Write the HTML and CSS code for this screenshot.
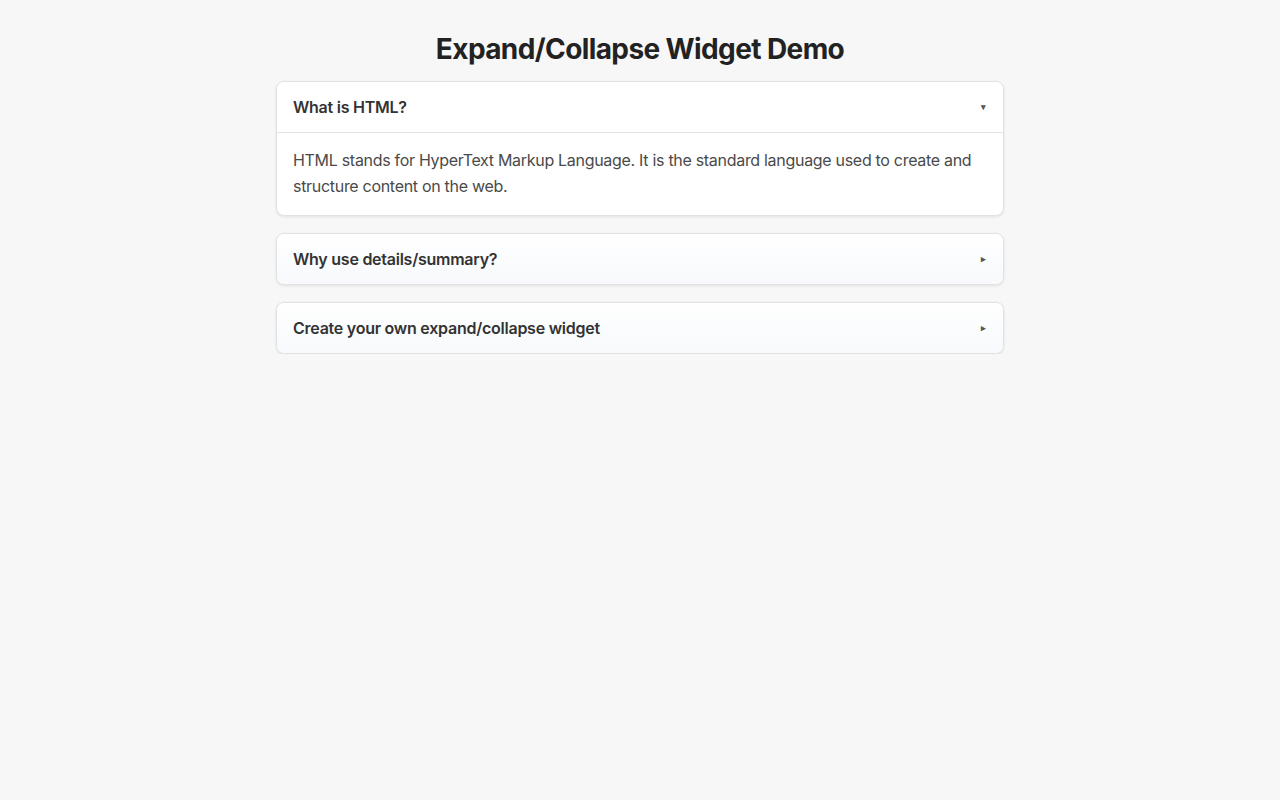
FILE: index.html
```html
<!DOCTYPE html>
<html lang="en">
<head>
<meta charset="utf-8">
<title>Expand/Collapse Widget Demo</title>
<link rel="stylesheet" href="styles.css">
</head>
<body>
<main class="page">
  <h1 class="title">Expand/Collapse Widget Demo</h1>
  <section class="card open">
    <div class="card-head"><span class="label">What is HTML?</span><span class="marker">▾</span></div>
    <div class="card-body">HTML stands for HyperText Markup Language. It is the standard language used to create and structure content on the web.</div>
  </section>
  <section class="card">
    <div class="card-head"><span class="label">Why use details/summary?</span><span class="marker">▸</span></div>
  </section>
  <section class="card">
    <div class="card-head"><span class="label">Create your own expand/collapse widget</span><span class="marker">▸</span></div>
  </section>
</main>
</body>
</html>
```
FILE: styles.css
```css
html, body {
  margin: 0;
  padding: 0;
}
body {
  background: #f7f7f7;
  font-family: Inter, "Noto Sans", "Liberation Sans", sans-serif;
  color: #222;
}
.page {
  width: 728px;
  margin: 0 auto;
  padding-top: 32px;
  display: flex;
  flex-direction: column;
  gap: 17px;
}
.title {
  margin: 0 0 -2px;
  font-size: 28px;
  line-height: 34px;
  font-weight: 700;
  letter-spacing: -0.6px;
  text-align: center;
  color: #222;
}
.card {
  background: #fff;
  border: 1px solid #e2e2e2;
  border-radius: 8px;
  box-shadow: 0 1px 3px rgba(0, 0, 0, 0.09);
  overflow: hidden;
}
.card-head {
  display: flex;
  align-items: center;
  justify-content: space-between;
  padding: 16px;
  font-size: 16px;
  line-height: 18px;
  font-weight: 600;
  letter-spacing: -0.25px;
  color: #333;
  background: linear-gradient(#ffffff, #f7f9fc);
}
.card.open .card-head {
  background: #fff;
  border-bottom: 1px solid #e2e2e2;
}
.marker {
  font-size: 9px;
  line-height: 18px;
  color: #555;
  margin-right: 1px;
}
.card-body {
  padding: 14px 16px 16px;
  font-size: 16px;
  line-height: 26px;
  font-weight: 400;
  letter-spacing: -0.3px;
  color: #4a4a4a;
}
```
